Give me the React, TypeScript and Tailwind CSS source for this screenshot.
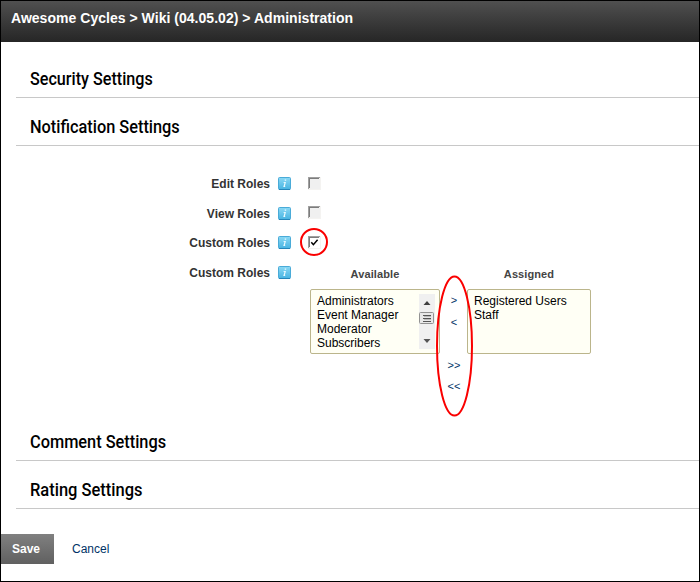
import React from 'react';

function Section({ title, className }: { title: string; className: string }) {
  return (
    <h2 className="ml-[15px] flex h-12 items-center border-b border-[#c8c8c8] pl-[14px] pt-[10px] font-['Roboto',sans-serif] text-[18px] font-medium leading-6 text-black">
      <span className={`origin-left ${className}`}>{title}</span>
    </h2>
  );
}

function InfoIcon() {
  return (
    <svg width="13" height="13" viewBox="0 0 13 13" className="ml-2 shrink-0">
      <defs>
        <linearGradient id="info" x1="0" y1="0" x2="0" y2="1">
          <stop offset="0" stopColor="#8bd9f5" />
          <stop offset="1" stopColor="#48b4e2" />
        </linearGradient>
      </defs>
      <rect x="0.5" y="0.5" width="12" height="12" rx="1" fill="url(#info)" stroke="#4aabd8" />
      <path d="M1 12.5h11" stroke="#2585b8" />
      <path d="M6.7 3.2h1.5M5.6 5.5h1.6L6.2 9.2M5.4 9.4h1.8" stroke="#e9faff" strokeWidth="1.2" fill="none" />
    </svg>
  );
}

function Check({ checked = false }: { checked?: boolean }) {
  return (
    <svg width="13" height="13" viewBox="0 0 13 13">
      <rect width="13" height="13" fill="#f4f3f1" />
      <path d="M0 0h12v1H1v11H0z" fill="#a0a0a0" />
      <path d="M1 1h10v1H2v9H1z" fill="#7c7c7c" />
      <rect x="2" y="2" width="10" height="10" fill={checked ? '#ffffff' : '#f0f0f0'} />
      {checked && <path d="M3.3 6.2L5.4 8.7L9.6 3.8" fill="none" stroke="#000" strokeWidth="1.5" />}
    </svg>
  );
}

function Row({ label, className, children }: { label: string; className: string; children?: React.ReactNode }) {
  return (
    <div className={`flex items-center ${className}`}>
      <div className="w-[269px] text-right text-[12px] font-bold leading-[14px] text-[#333]">{label}</div>
      <InfoIcon />
      <div className="ml-[17px] flex">{children}</div>
    </div>
  );
}

function Scrollbar() {
  return (
    <svg width="16" height="55" viewBox="0 0 16 55">
      <rect width="16" height="55" fill="#f0f0f0" />
      <path d="M8 7l3.5 4h-7z" fill="#404040" />
      <rect x="0.5" y="18.5" width="14" height="11" rx="1" fill="#e8e8e8" stroke="#929292" />
      <path d="M4 21.5h8M4 24.5h8M4 27.5h8" stroke="#555" />
      <path d="M5 22.5h7M5 25.5h7" stroke="#bbb" />
      <path d="M4.5 45h7L8 49z" fill="#555" />
    </svg>
  );
}

function List({ items, className, children }: { items: string[]; className: string; children?: React.ReactNode }) {
  return (
    <div className={`flex h-[65px] justify-between rounded-[2px] border border-[#bbb58b] bg-[#fffff5] pl-[6px] pr-[4px] pt-1 text-[12px] leading-[14px] text-black ${className}`}>
      <ul>
        {items.map((item) => (
          <li key={item}>{item}</li>
        ))}
      </ul>
      {children}
    </div>
  );
}

export default function App() {
  return (
    <div className="relative h-[582px] w-[700px] overflow-hidden border border-black bg-white font-['Liberation_Sans',Arial,sans-serif]">
      <header className="h-[41px] bg-linear-to-b from-[#505050] to-[#262626] pl-[10px] pt-2 text-[14px] font-bold leading-[18px] text-white">
        <span className="tracking-[0.03px]">Awesome Cycles &gt; Wiki (04.05.02) &gt; Administration</span>
      </header>
      <main className="pt-2">
        <Section title="Security Settings" className="scale-x-[0.897]" />
        <Section title="Notification Settings" className="scale-x-[0.907]" />
        <div className="h-[267px] pt-[31px]">
          <Row label="Edit Roles" className="h-[13px]"><Check /></Row>
          <Row label="View Roles" className="mt-[17px] h-[13px]"><div className="-mt-0.5"><Check /></div></Row>
          <Row label="Custom Roles" className="mt-4 h-[13px]"><Check checked /></Row>
          <Row label="Custom Roles" className="mt-[17px] h-[13px]" />
          <div className="-mt-[11px] ml-[309px] flex text-[11px] text-[#444]">
            <div className="w-[130px]">
              <div className="mb-[9px] text-center font-bold leading-[12px] tracking-[0.1px]">Available</div>
              <List items={['Administrators', 'Event Manager', 'Moderator', 'Subscribers']} className="w-[130px]"><Scrollbar /></List>
            </div>
            <div className="flex w-[27px] flex-col items-center pl-px pt-[26px] text-[11px] leading-3 text-[#003366]">
              <span>&gt;</span>
              <span className="mt-[10px]">&lt;</span>
              <span className="mt-[31px]">&gt;&gt;</span>
              <span className="mt-[9px]">&lt;&lt;</span>
            </div>
            <div className="w-[124px]">
              <div className="mb-[9px] text-center font-bold leading-[12px] tracking-[0.1px]">Assigned</div>
              <List items={['Registered Users', 'Staff']} className="w-[124px]" />
            </div>
          </div>
        </div>
        <Section title="Comment Settings" className="scale-x-[0.907]" />
        <Section title="Rating Settings" className="scale-x-[0.915]" />
      </main>
      <footer className="mt-[25px] flex h-[30px] items-center text-[12px]">
        <button className="h-[30px] w-[53px] bg-linear-to-b from-[#808080] to-[#606060] pr-[3px] font-bold text-white">Save</button>
        <a className="ml-[18px] text-[#003366]">Cancel</a>
      </footer>
      <svg className="pointer-events-none absolute -left-px -top-px" width="700" height="582" fill="none" stroke="#fa0000" strokeWidth="2">
        <ellipse cx="314" cy="242" rx="13" ry="13" />
        <ellipse cx="454.5" cy="346" rx="17.5" ry="69.5" />
      </svg>
    </div>
  );
}
